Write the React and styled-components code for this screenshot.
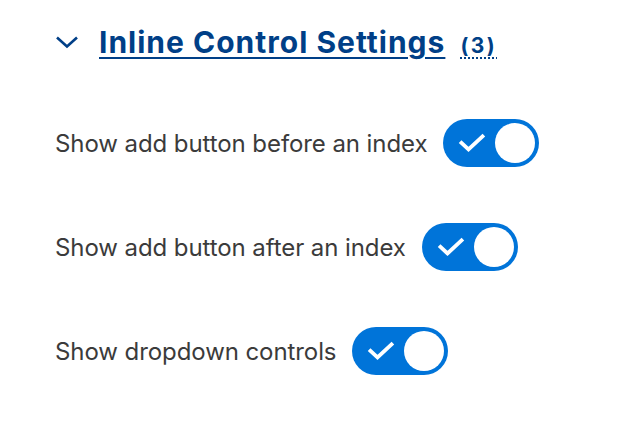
import React, { useState } from "react";
import styled, { createGlobalStyle } from "styled-components";

const GlobalStyle = createGlobalStyle`
  html, body {
    margin: 0;
    padding: 0;
    background: #ffffff;
  }
  body {
    font-family: Inter, "Noto Sans", sans-serif;
  }
`;

const Panel = styled.div`
  width: 618px;
  height: 422px;
  box-sizing: border-box;
  padding: 24px 0 0 55px;
  display: flex;
  flex-direction: column;
`;

const Header = styled.button`
  display: flex;
  align-items: center;
  gap: 20px;
  background: none;
  border: none;
  padding: 0;
  cursor: pointer;
  font-family: inherit;
  text-align: left;
`;

const Chevron = styled.svg`
  width: 24px;
  height: 14px;
  flex-shrink: 0;
`;

const Heading = styled.span`
  display: flex;
  align-items: baseline;
  gap: 15px;
  color: #003f87;
  font-weight: 700;
`;

const Title = styled.span`
  font-size: 30px;
  letter-spacing: 1px;
  text-decoration: underline;
  text-decoration-thickness: 2px;
  text-underline-offset: 4px;
`;

const Count = styled.span`
  font-size: 21px;
  letter-spacing: 2.5px;
  text-decoration: underline dotted;
  text-decoration-thickness: 2px;
  text-underline-offset: 4px;
`;

const List = styled.div`
  display: flex;
  flex-direction: column;
  gap: 56px;
  margin-top: 59px;
`;

const Row = styled.label`
  display: flex;
  align-items: center;
  gap: 16px;
  cursor: pointer;
`;

const Label = styled.span`
  font-size: 24px;
  letter-spacing: -0.08px;
  color: #3b3b3b;
`;

const Track = styled.span`
  width: 96px;
  height: 48px;
  box-sizing: border-box;
  border-radius: 24px;
  background: ${(p) => (p.$on ? "#0074d9" : "#8e929c")};
  display: flex;
  align-items: center;
  justify-content: space-between;
  padding: 0 4px 0 15px;
  flex-shrink: 0;
`;

const Knob = styled.span`
  width: 40px;
  height: 40px;
  border-radius: 50%;
  background: #ffffff;
`;

const Check = styled.svg`
  width: 28px;
  height: 20px;
  visibility: ${(p) => (p.$on ? "visible" : "hidden")};
`;

const settings = [
  "Show add button before an index",
  "Show add button after an index",
  "Show dropdown controls",
];

function Toggle({ on }) {
  return (
    <Track $on={on}>
      <Check $on={on} viewBox="0 0 28 20">
        <path
          d="M3.5 10 L10.5 16.5 L24.5 3.5"
          fill="none"
          stroke="#fff"
          strokeWidth="3.8"
          strokeLinecap="square"
        />
      </Check>
      <Knob />
    </Track>
  );
}

export default function App() {
  const [values, setValues] = useState([true, true, true]);
  return (
    <>
      <GlobalStyle />
      <Panel>
        <Header>
          <Chevron viewBox="0 0 24 14">
            <path
              d="M2 2.5 L12 11.5 L22 2.5"
              fill="none"
              stroke="#003f87"
              strokeWidth="2.6"
            />
          </Chevron>
          <Heading>
            <Title>Inline Control Settings</Title>
            <Count>(3)</Count>
          </Heading>
        </Header>
        <List>
          {settings.map((text, i) => (
            <Row
              key={text}
              onClick={() =>
                setValues(values.map((v, j) => (j === i ? !v : v)))
              }
            >
              <Label>{text}</Label>
              <Toggle on={values[i]} />
            </Row>
          ))}
        </List>
      </Panel>
    </>
  );
}
